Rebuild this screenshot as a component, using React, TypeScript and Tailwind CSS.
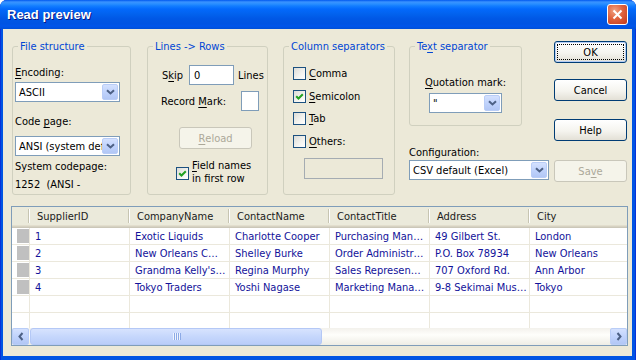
import React from 'react';

const FONT = "font-['DejaVu_Sans_Condensed','DejaVu_Sans',sans-serif]";

const U = ({ children }: { children: React.ReactNode }) => (
  <span className="underline underline-offset-[2px] decoration-1">{children}</span>
);

const Chevron = ({ dir = 'down' }: { dir?: 'down' | 'left' | 'right' }) => {
  if (dir === 'left')
    return (
      <svg width="6" height="9" viewBox="0 0 6 9">
        <path d="M4.5 1 L1.5 4.5 L4.5 8" stroke="#4d6185" strokeWidth="2" fill="none" />
      </svg>
    );
  if (dir === 'right')
    return (
      <svg width="6" height="9" viewBox="0 0 6 9">
        <path d="M1.5 1 L4.5 4.5 L1.5 8" stroke="#4d6185" strokeWidth="2" fill="none" />
      </svg>
    );
  return (
    <svg width="9" height="6" viewBox="0 0 9 6">
      <path d="M1 1.2 L4.5 4.5 L8 1.2" stroke="#4d6185" strokeWidth="2" fill="none" />
    </svg>
  );
};

const BlueBtn = ({ children, className = '' }: { children: React.ReactNode; className?: string }) => (
  <div
    className={`flex items-center justify-center rounded-[2px] border border-[#b9cdf7] bg-[linear-gradient(to_bottom,#d4e1fe,#c0d3fc_50%,#b2c7f5)] ${className}`}
  >
    {children}
  </div>
);

const Combo = ({ value, className = '' }: { value: string; className?: string }) => (
  <div className={`flex h-[20px] border border-[#7f9db9] bg-white p-px ${className}`}>
    <div className="flex flex-1 items-center overflow-hidden whitespace-nowrap pl-[2px] text-black">{value}</div>
    <BlueBtn className="w-[16px]">
      <Chevron />
    </BlueBtn>
  </div>
);

const Check = ({ checked = false }: { checked?: boolean }) => (
  <div className="flex h-[13px] w-[13px] shrink-0 items-center justify-center border border-[#1c5180] bg-[linear-gradient(135deg,#dcdcd7,#f4f4f0_60%,#ffffff)]">
    {checked && (
      <svg width="9" height="9" viewBox="0 0 9 9">
        <path d="M1.2 4.2 L3.5 6.5 L7.8 2.2" stroke="#21a121" strokeWidth="2" fill="none" />
      </svg>
    )}
  </div>
);

const Button = ({
  children,
  disabled,
  focus,
  className = '',
}: {
  children: React.ReactNode;
  disabled?: boolean;
  focus?: boolean;
  className?: string;
}) => (
  <div
    className={`flex h-[22px] w-[73px] items-center justify-center rounded-[3px] border ${
      disabled
        ? 'border-[#c9c7ba] bg-[#f5f4ea] text-[#aca899]'
        : 'border-[#003c74] bg-[linear-gradient(to_bottom,#ffffff,#f5f4ef_55%,#e3e0d6)] text-black'
    } ${focus ? '[outline:1px_dotted_#000] [outline-offset:-4px] shadow-[inset_0_0_0_1px_#b6cdf4]' : ''} ${className}`}
  >
    {children}
  </div>
);

const Group = ({
  title,
  className = '',
  children,
}: {
  title: React.ReactNode;
  className?: string;
  children: React.ReactNode;
}) => (
  <fieldset className={`mt-[11px] shrink-0 rounded-[3px] border border-[#d0d0bf] ${className}`}>
    <legend className="ml-[5px] px-[2px] leading-[13px] text-[#0046d5]">{title}</legend>
    {children}
  </fieldset>
);

const columns = ['SupplierID', 'CompanyName', 'ContactName', 'ContactTitle', 'Address', 'City'];
const rows = [
  ['1', 'Exotic Liquids', 'Charlotte Cooper', 'Purchasing Man…', '49 Gilbert St.', 'London'],
  ['2', 'New Orleans C…', 'Shelley Burke', 'Order Administr…', 'P.O. Box 78934', 'New Orleans'],
  ['3', "Grandma Kelly's…", 'Regina Murphy', 'Sales Represen…', '707 Oxford Rd.', 'Ann Arbor'],
  ['4', 'Tokyo Traders', 'Yoshi Nagase', 'Marketing Mana…', '9-8 Sekimai Mus…', 'Tokyo'],
  ['', '', '', '', '', ''],
  ['', '', '', '', '', ''],
];
const colW = ['w-[100px]', 'w-[100px]', 'w-[100px]', 'w-[100px]', 'w-[100px]', 'flex-1'];

const Grid = () => (
  <div className="ml-[8px] mt-[10px] flex h-[140px] w-[617px] flex-col border border-[#7f9db9] bg-white">
    <div className="flex h-[21px] shrink-0 bg-[#ebeadb] pb-[3px] shadow-[inset_0_-1px_#cbc7b8,inset_0_-2px_#d6d2c2,inset_0_-3px_#e2decd]">
      <div className="flex w-[18px] items-center justify-end">
        <div className="h-[14px] w-[2px] border-r border-white bg-[#c7c5b2]" />
      </div>
      {columns.map((c, i) => (
        <div key={c} className={`flex items-center ${colW[i]}`}>
          <span className="flex-1 pl-[7px] text-[#1a1a1a]">{c}</span>
          {i < 5 && <div className="h-[14px] w-[2px] border-r border-white bg-[#c7c5b2]" />}
        </div>
      ))}
    </div>
    <div className="flex-1 overflow-hidden">
      {rows.map((r, ri) => (
        <div key={ri} className="flex h-[17px] border-b border-[#ebe8dc]">
          <div className="flex w-[18px] items-center border-r border-[#ebe8dc] pl-[5px]">
            {r[0] && <div className="h-[14px] w-[12px] bg-[#c0c0c0]" />}
          </div>
          {r.map((v, ci) => (
            <div
              key={ci}
              className={`flex items-center overflow-hidden whitespace-nowrap pl-[5px] text-[#12129a] ${colW[ci]} ${
                ci < 5 ? 'border-r border-[#ebe8dc]' : ''
              }`}
            >
              {v}
            </div>
          ))}
        </div>
      ))}
    </div>
    <div className="flex h-[17px] shrink-0 bg-[linear-gradient(to_bottom,#f3f1ec,#fefefb_40%,#eeede5)]">
      <BlueBtn className="w-[17px]">
        <Chevron dir="left" />
      </BlueBtn>
      <div className="ml-px flex w-[292px] items-center justify-center rounded-[3px] border border-[#b4c8f6] bg-[linear-gradient(to_bottom,#d7e3fe,#c6d7fc_50%,#b9cdf9)]">
        <div className="flex gap-px">
          {[0, 1, 2, 3].map((g) => (
            <div key={g} className="h-[7px] w-[1px] bg-[#eef4fe] shadow-[1px_0_#8caae6]" />
          ))}
        </div>
      </div>
      <div className="flex-1" />
      <BlueBtn className="w-[17px]">
        <Chevron dir="right" />
      </BlueBtn>
    </div>
  </div>
);

export default function App() {
  return (
    <div className={`h-[360px] w-[636px] overflow-hidden bg-white text-[11px] leading-[13px] ${FONT}`}>
      <div className="flex h-[360px] flex-col rounded-t-[7px] bg-[#0054e3] shadow-[inset_1px_0_#0831d9,inset_-1px_0_#0831d9]">
        <div className="flex h-[29px] shrink-0 items-center justify-between rounded-t-[7px] bg-[linear-gradient(to_bottom,#0058ee_0px,#3a93ff_2px,#288eff_4px,#127dff_6px,#0369fc_9px,#0262ee_14px,#0057e5_19px,#0054e3_24px,#0055eb_26px,#0050d8_29px)] pl-[7px] pr-[8px]">
          <span className="font-['Liberation_Sans',Arial,sans-serif] text-[13px] font-bold text-white [text-shadow:1px_1px_0_#0a1883]">
            Read preview
          </span>
          <div className="flex h-[21px] w-[21px] items-center justify-center rounded-[3px] border border-white bg-[radial-gradient(circle_at_35%_30%,#f0a283,#e0633e_45%,#c2381b)]">
            <svg width="11" height="11" viewBox="0 0 11 11">
              <path d="M1.5 1.5 L9.5 9.5 M9.5 1.5 L1.5 9.5" stroke="#ffffff" strokeWidth="2" />
            </svg>
          </div>
        </div>

        <div className="ml-[3px] mr-[4px] flex h-[327px] shrink-0 flex-col bg-[#ece9d8] text-black">
          <div className="flex h-[167px] shrink-0 pl-[9px]">
            <Group title="File structure" className="h-[155px] w-[119px]">
              <div className="flex flex-col pl-[2px]">
                <div className="mt-[13px]">
                  <U>E</U>ncoding:
                </div>
                <Combo value="ASCII" className="mt-[3px] w-[105px]" />
                <div className="mt-[13px]">
                  Code <U>p</U>age:
                </div>
                <Combo value="ANSI (system def" className="mt-[8px] w-[105px]" />
                <div className="mt-[4px]">System codepage:</div>
                <div className="mt-[5px] whitespace-pre">1252  (ANSI -</div>
              </div>
            </Group>

            <Group title="Lines -> Rows" className="ml-[16px] h-[155px] w-[121px]">
              <div className="flex flex-col">
                <div className="mt-[12px] flex h-[20px] items-center pl-[14px]">
                  <span className="w-[27px]">
                    S<U>k</U>ip
                  </span>
                  <div className="flex h-[20px] w-[45px] items-center border border-[#7f9db9] bg-white pl-[4px]">0</div>
                  <span className="ml-[4px]">Lines</span>
                </div>
                <div className="mt-[6px] flex h-[20px] items-center pl-[13px]">
                  <span className="w-[80px]">
                    Record <U>M</U>ark:
                  </span>
                  <div className="h-[20px] w-[18px] border border-[#7f9db9] bg-white" />
                </div>
                <Button disabled className="ml-[31px] mt-[16px] h-[21px]">
                  <U>R</U>eload
                </Button>
                <div className="ml-[28px] mt-[10px] flex items-start">
                  <div className="mt-[8px]">
                    <Check checked />
                  </div>
                  <div className="ml-[3px] leading-[13px]">
                    <div>
                      <U>F</U>ield names
                    </div>
                    <div>in first row</div>
                  </div>
                </div>
              </div>
            </Group>

            <Group title="Column separators" className="ml-[15px] h-[155px] w-[112px]">
              <div className="flex flex-col pl-[9px]">
                <div className="mt-[14px] flex h-[13px] items-center">
                  <Check />
                  <span className="ml-[3px]">
                    <U>C</U>omma
                  </span>
                </div>
                <div className="mt-[10px] flex h-[13px] items-center">
                  <Check checked />
                  <span className="ml-[3px]">
                    <U>S</U>emicolon
                  </span>
                </div>
                <div className="mt-[9px] flex h-[13px] items-center">
                  <Check />
                  <span className="ml-[3px]">
                    <U>T</U>ab
                  </span>
                </div>
                <div className="mt-[10px] flex h-[13px] items-center">
                  <Check />
                  <span className="ml-[3px]">
                    <U>O</U>thers:
                  </span>
                </div>
                <div className="ml-[11px] mt-[10px] h-[21px] w-[79px] border border-[#a5acb2] bg-[#ece9d8]" />
              </div>
            </Group>

            <div className="ml-[14px] flex">
              <div className="flex w-[140px] flex-col">
                <Group title={<>Te<U>x</U>t separator</>} className="h-[86px] w-[113px]">
                  <div className="flex flex-col items-center">
                    <div className="mt-[23px]">
                      <U>Q</U>uotation mark:
                    </div>
                    <Combo value={'"'} className="mt-[4px] w-[73px]" />
                  </div>
                </Group>
                <div className="mt-[20px]">Configuration:</div>
                <Combo value="CSV default (Excel)" className="mt-[1px] w-[140px]" />
              </div>
              <div className="ml-[5px] flex flex-col">
                <Button focus className="mt-[12px]">
                  OK
                </Button>
                <Button className="mt-[16px]">Cancel</Button>
                <Button className="mt-[18px]">Help</Button>
                <Button disabled className="mt-[19px]">
                  Sa<U>v</U>e
                </Button>
              </div>
            </div>
          </div>

          <Grid />
        </div>
      </div>
    </div>
  );
}
